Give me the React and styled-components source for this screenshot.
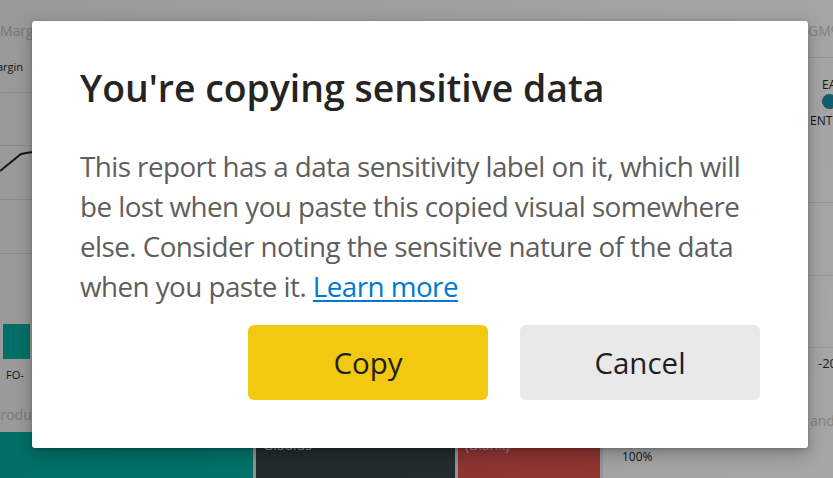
import styled, { createGlobalStyle } from 'styled-components'

const GlobalStyle = createGlobalStyle`
  html, body {
    margin: 0;
    padding: 0;
    width: 833px;
    height: 478px;
    overflow: hidden;
    background: #fff;
  }
  * { box-sizing: border-box; }
`

const Page = styled.div`
  position: relative;
  width: 833px;
  height: 478px;
  overflow: hidden;
  font-family: "Open Sans", "Noto Sans", sans-serif;
`

const Report = styled.div`
  display: flex;
  flex-direction: column;
  width: 100%;
  height: 100%;
  background: #fff;
`

const TopArea = styled.div`
  flex: 0 0 432px;
  min-height: 0;
  overflow: hidden;
  display: flex;
  justify-content: space-between;
`

const SidePanel = styled.div`
  width: ${p => p.$width}px;
  overflow: hidden;
  display: flex;
  flex-direction: column;
  padding-top: 21px;
`

const CardTitle = styled.div`
  flex: 0 0 ${p => p.$h || 33}px;
  font-size: 14px;
  line-height: 20px;
  padding-top: ${p => p.$pad || 0}px;
  color: #c8c8c8;
  white-space: nowrap;
  margin-left: ${p => p.$shift || 0}px;
`

const SubTitle = styled.div`
  flex: 0 0 ${p => p.$h}px;
  font-size: 11px;
  line-height: 20px;
  padding-top: ${p => p.$pad || 0}px;
  color: #252423;
  white-space: nowrap;
  margin-left: ${p => p.$shift || 0}px;
`

const GridRow = styled.div`
  flex: 0 0 ${p => p.$h}px;
  border-top: 1px solid #e6e6e6;
  font-size: 13px;
  color: #333;
  white-space: nowrap;
  display: flex;
  align-items: flex-start;
  padding-top: ${p => p.$pad || 0}px;
`

const Bar = styled.div`
  flex: 0 0 35px;
  width: 27px;
  margin: 17px 0 0 3px;
  background: #01b8aa;
`

const Legend = styled.div`
  display: flex;
  flex-direction: column;
  align-items: flex-start;
  font-size: 12px;
  color: #252423;
  padding: 20px 0 0 14px;
  line-height: 13px;
`

const Dot = styled.span`
  display: block;
  width: 15px;
  height: 15px;
  border-radius: 50%;
  background: #1f8ea3;
  margin: 3px 0 5px;
`

const LegendLabel = styled.span`
  margin-left: ${p => p.$shift || 0}px;
`

const Strip = styled.div`
  flex: 0 0 46px;
  display: flex;
  gap: 3px;
  background: #eaeaea;
`

const Block = styled.div`
  width: ${p => p.$w}px;
  background: ${p => p.$bg};
  color: rgba(255, 255, 255, 0.9);
  font-size: 14px;
  padding: 4px 7px 0;
  line-height: 18px;
`

const Percent = styled.div`
  flex: 1;
  background: #fff;
  font-size: 12px;
  line-height: 16px;
  color: #252423;
  padding: 17px 0 0 19px;
`

const Overlay = styled.div`
  position: absolute;
  inset: 0;
  background: linear-gradient(100deg, rgba(0, 0, 0, 0.4), rgba(0, 0, 0, 0.35));
`

const Dialog = styled.div`
  position: absolute;
  left: 32px;
  top: 21px;
  width: 776px;
  height: 427px;
  background: #fff;
  border-radius: 3px;
  box-shadow: 0 6px 18px rgba(0, 0, 0, 0.25), 0 1px 4px rgba(0, 0, 0, 0.2);
  padding: 42px 48px 48px;
  display: flex;
  flex-direction: column;
`

const Title = styled.h1`
  margin: 0;
  font-size: 37.4px;
  font-weight: 600;
  color: #252423;
  line-height: 50px;
`

const Body = styled.p`
  margin: 33px 0 0;
  font-size: 27.8px;
  line-height: 40px;
  color: #605e5c;
  letter-spacing: -0.55px;
`

const Link = styled.a`
  color: #0078d4;
  text-decoration: underline;
  text-decoration-thickness: 2px;
  text-underline-offset: 3px;
`

const Footer = styled.div`
  margin-top: auto;
  display: flex;
  justify-content: flex-end;
  gap: 32px;
`

const Button = styled.button`
  width: 240px;
  height: 75px;
  border: none;
  border-radius: 6px;
  font-family: inherit;
  font-size: 29.5px;
  color: #201f1e;
  background: ${p => (p.$primary ? '#f2c811' : '#e9e9e9')};
  cursor: pointer;
`

export default function App() {
  return (
    <Page>
      <GlobalStyle />
      <Report>
        <TopArea>
          <SidePanel $width={32}>
            <CardTitle>Margin %</CardTitle>
            <SubTitle $h={38} $pad={3} $shift={-13}>Margin</SubTitle>
            <GridRow $h={53} />
            <GridRow $h={54}>
              <svg width="32" height="53" viewBox="0 0 32 53">
                <path d="M0 25 L21 8 L32 6" fill="none" stroke="#252423" strokeWidth="2" />
              </svg>
            </GridRow>
            <GridRow $h={54} />
            <GridRow $h={54} />
            <Bar />
            <SubTitle $h={46} $pad={6} $shift={6}>FO-</SubTitle>
            <CardTitle $h={20} $shift={-8}>Product</CardTitle>
          </SidePanel>
          <SidePanel $width={25}>
            <CardTitle $h={36}>GM%</CardTitle>
            <GridRow $h={145}>
              <Legend>
                <LegendLabel>EA</LegendLabel>
                <Dot />
                <LegendLabel $shift={-12}>ENT</LegendLabel>
              </Legend>
            </GridRow>
            <GridRow $h={73} />
            <GridRow $h={72} />
            <GridRow $h={58} $pad={6}>
              <LegendLabel $shift={10}>-20</LegendLabel>
            </GridRow>
            <CardTitle $h={27} $pad={6} $shift={2}>and</CardTitle>
          </SidePanel>
        </TopArea>
        <Strip>
          <Block $w={253} $bg="#01b8aa" />
          <Block $w={199} $bg="#374649">Gladius</Block>
          <Block $w={142} $bg="#e1544f">(Blank)</Block>
          <Percent>100%</Percent>
        </Strip>
      </Report>
      <Overlay />
      <Dialog role="dialog">
        <Title>You're copying sensitive data</Title>
        <Body>
          This report has a data sensitivity label on it, which will be lost when you paste this copied
          visual somewhere else. Consider noting the sensitive nature of the data when you paste it.{' '}
          <Link href="#">Learn more</Link>
        </Body>
        <Footer>
          <Button $primary>Copy</Button>
          <Button>Cancel</Button>
        </Footer>
      </Dialog>
    </Page>
  )
}
